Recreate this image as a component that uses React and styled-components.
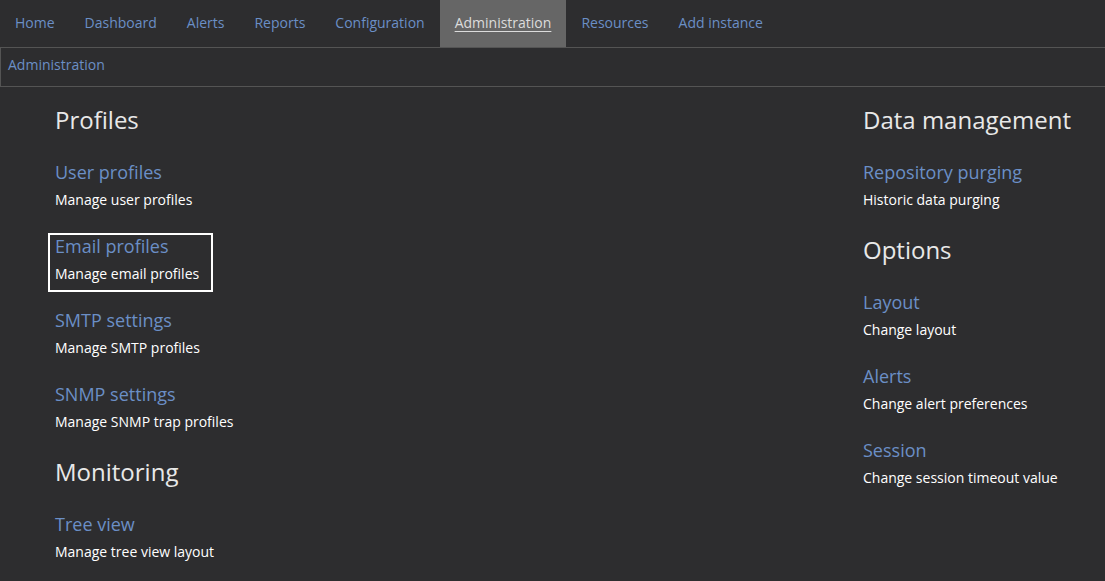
import React from 'react';
import styled, { createGlobalStyle } from 'styled-components';

const GlobalStyle = createGlobalStyle`
    html, body {
        margin: 0;
        padding: 0;
        background: #2d2d2f;
        font-family: "Open Sans", "Noto Sans", sans-serif;
        color: #ffffff;
    }
`;

const NavBar = styled.nav`
    display: flex;
    height: 47px;
    background: #2d2d2f;
`;

const NavItem = styled.a`
    display: flex;
    align-items: center;
    padding: 0 15px 2px 15px;
    font-size: 14px;
    color: ${props => (props.active ? '#dcdcdc' : '#6b8fc6')};
    background: ${props => (props.active ? '#666666' : 'transparent')};
    text-decoration: ${props => (props.active ? 'underline' : 'none')};
    text-underline-offset: 3px;
    cursor: pointer;
`;

const Breadcrumb = styled.div`
    box-sizing: border-box;
    height: 40px;
    display: flex;
    align-items: center;
    padding: 0 0 6px 7px;
    border: 1px solid #545454;
    border-right: none;
    font-size: 14px;
    color: #6b8fc6;
`;

const Content = styled.main`
    display: flex;
    padding: 17px 0 0 55px;
`;

const Column = styled.section`
    display: flex;
    flex-direction: column;
    align-items: flex-start;
    width: ${props => props.width || 'auto'};
    flex: ${props => (props.grow ? 1 : 'none')};
`;

const Heading = styled.h2`
    margin: ${props => (props.first ? '0' : '1px')} 0 23px 0;
    font-size: 24px;
    line-height: 32px;
    font-weight: 400;
    color: #e8e8e8;
`;

const Item = styled.div`
    border: 2px solid ${props => (props.focused ? '#ffffff' : 'transparent')};
    padding: 0 12px 6px 5px;
    margin: 0 0 15px -7px;
`;

const Title = styled.a`
    display: block;
    font-size: 18px;
    line-height: 22px;
    color: #6b8fc6;
    cursor: pointer;
`;

const Description = styled.div`
    margin-top: 7px;
    font-size: 14px;
    line-height: 20px;
    color: #ffffff;
`;

const navItems = ['Home', 'Dashboard', 'Alerts', 'Reports', 'Configuration', 'Administration', 'Resources', 'Add instance'];

const leftSections = [
    {
        heading: 'Profiles',
        items: [
            { title: 'User profiles', desc: 'Manage user profiles' },
            { title: 'Email profiles', desc: 'Manage email profiles', focused: true },
            { title: 'SMTP settings', desc: 'Manage SMTP profiles' },
            { title: 'SNMP settings', desc: 'Manage SNMP trap profiles' },
        ],
    },
    {
        heading: 'Monitoring',
        items: [{ title: 'Tree view', desc: 'Manage tree view layout' }],
    },
];

const rightSections = [
    {
        heading: 'Data management',
        items: [{ title: 'Repository purging', desc: 'Historic data purging' }],
    },
    {
        heading: 'Options',
        items: [
            { title: 'Layout', desc: 'Change layout' },
            { title: 'Alerts', desc: 'Change alert preferences' },
            { title: 'Session', desc: 'Change session timeout value' },
        ],
    },
];

function renderSections(sections) {
    return sections.map((section, i) => (
        <React.Fragment key={section.heading}>
            <Heading first={i === 0}>{section.heading}</Heading>
            {section.items.map(item => (
                <Item key={item.title} focused={item.focused}>
                    <Title>{item.title}</Title>
                    <Description>{item.desc}</Description>
                </Item>
            ))}
        </React.Fragment>
    ));
}

export default function App() {
    return (
        <>
            <GlobalStyle />
            <NavBar>
                {navItems.map(name => (
                    <NavItem key={name} active={name === 'Administration'}>{name}</NavItem>
                ))}
            </NavBar>
            <Breadcrumb>Administration</Breadcrumb>
            <Content>
                <Column grow>{renderSections(leftSections)}</Column>
                <Column width="242px">{renderSections(rightSections)}</Column>
            </Content>
        </>
    );
}
